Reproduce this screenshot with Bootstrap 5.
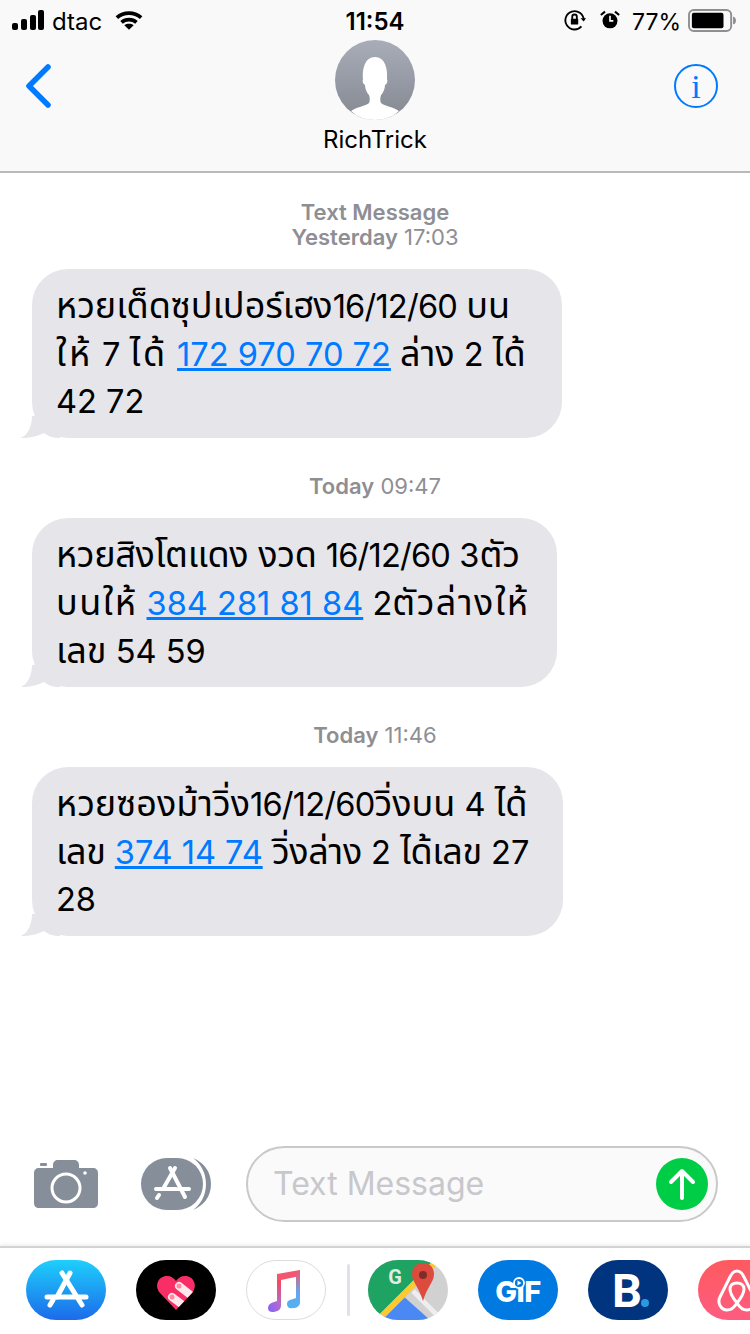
<!DOCTYPE html>
<html lang="th">
<head>
  <meta charset="UTF-8">
  <meta name="viewport" content="width=device-width, initial-scale=1.0">
  <title>Messages</title>
  <link href="https://cdn.jsdelivr.net/npm/bootstrap@5.3.3/dist/css/bootstrap.min.css" rel="stylesheet">
  <style>
    html, body { height: 1334px; }
    body {
      width: 750px;
      overflow: hidden;
      font-family: Inter, "Noto Sans Thai", "Noto Sans", "DejaVu Sans", sans-serif;
      color: #000;
      background: #fff;
    }
    .top-area {
      height: 173px;
      background: #f9f9f9;
      border-bottom: 2px solid #b9b9bb;
    }
    .status-bar {
      height: 40px;
      padding: 0 14px 0 12px;
      font-size: 24px;
      line-height: 36px;
    }
    .status-side { flex: 1 1 0; }
    .status-text { padding-top: 4px; }
    .status-time { font-weight: 600; margin-left: 2px; }
    .carrier { margin-left: 8px; }
    .wifi-icon { margin-left: 13px; }
    .lock-icon { margin-right: 14px; }
    .alarm-icon { margin-right: 12px; }
    .battery-pct { font-size: 23px; margin-right: 7px; }
    .nav-row { padding: 0 32px; height: 131px; }
    .nav-side { width: 44px; padding-top: 24px; }
    .nav-back { margin-left: -7px; display: block; }
    .nav-info { display: block; }
    .contact-name { font-size: 24px; line-height: 30px; margin-top: 5px; }
    .avatar { width: 80px; height: 80px; display: block; }
    .thread { padding-top: 27px; }
    .stamp {
      font-size: 22px;
      line-height: 25px;
      color: #8e8e93;
      text-align: center;
    }
    .stamp b { font-weight: 600; }
    .stamp-gap { margin-top: 36px; }
    .bubble {
      position: relative;
      background: #e5e5ea;
      border-radius: 36px;
      margin: 19px 0 0 32px;
      padding: 13px 0 0 24px;
      height: 169px;
      font-size: 32.6px;
      line-height: 47px;
      white-space: nowrap;
    }
    .bubble a { color: #007aff; }
    .th-run { font-size: 36px; }
    .th-wide { letter-spacing: 2.7px; }
    .th-mid { letter-spacing: 1.5px; }
    .th-tight { letter-spacing: -.3px; }
    .date-run { letter-spacing: -.8px; }
    .bubble-a { width: 530px; }
    .bubble-b { width: 525px; }
    .bubble-c { width: 531px; }
    .bubble-tail { position: absolute; left: -12px; bottom: 0; width: 40px; height: 22px; }
    .composer { padding: 0 32px 0 34px; height: 76px; margin-top: auto; margin-bottom: 24px; }
    .composer-btn { flex: none; }
    .drawer-btn { margin-left: 43px; }
    .msg-field {
      margin-left: 35px;
      flex: 1 1 0;
      height: 76px;
      background: #fafafa;
      border: 2px solid #c8c8cd;
      border-radius: 38px;
      padding: 0 8px 0 25px;
      font-size: 32px;
      color: #c7c7cc;
    }
    .send-btn {
      width: 52px; height: 52px;
      border-radius: 50%;
      background: #00cd46;
    }
    .dock {
      height: 88px;
      border-top: 2px solid #d3d3d6;
      box-shadow: 0 -2px 3px rgba(0,0,0,.06);
      padding: 12px 0 0 26px;
      gap: 30px;
      overflow: hidden;
      flex: none;
    }
    .dock svg { flex: none; width: 80px; height: 60px; display: block; }
    .dock-sep { flex: none; width: 3px; height: 52px; margin: 4px -12px 0 -9px; background: #e1e1e8; border-radius: 2px; }
  </style>
</head>
<body class="d-flex flex-column">
  <header class="top-area flex-shrink-0">
    <div class="status-bar d-flex align-items-center">
      <div class="status-side d-flex align-items-center">
        <svg width="32" height="20" viewBox="0 0 32 20"><rect x="0" y="13" width="6" height="7" rx="2"/><rect x="9" y="9" width="6" height="11" rx="2"/><rect x="18" y="5" width="6" height="15" rx="2"/><rect x="26" y="0" width="6" height="20" rx="2"/></svg>
        <span class="carrier status-text">dtac</span>
        <svg class="wifi-icon" width="28" height="21" viewBox="0 0 30 22" fill="none" stroke="#000" stroke-width="4"><path d="M2 8c7.500-6.500 18.500-6.500 26 0"/><path d="M7 13c4.500-4 11.500-4 16 0"/><path d="M15 21l-5-5c3-2 7-2 10 0z" fill="#000" stroke="none"/></svg>
      </div>
      <div class="status-time status-text">11:54</div>
      <div class="status-side d-flex align-items-center justify-content-end">
        <svg class="lock-icon" width="22" height="22" viewBox="0 0 24 24" fill="none" stroke="#000" stroke-width="2"><path d="M19 19a10 10 0 1 1 2.500-7"/><path d="M18 10l3.500 3.500L24 10" fill="#000" stroke="none"/><rect x="7.500" y="10.500" width="8" height="6.500" rx="1" fill="#000" stroke="none"/><path d="M9 11V8.500a2.500 2.500 0 0 1 5 0V11"/></svg>
        <svg class="alarm-icon" width="20" height="22" viewBox="0 0 24 24"><circle cx="12" cy="13" r="9"/><path d="M12 7v6h4" fill="none" stroke="#fff" stroke-width="2"/><path d="M1 6l5-4M23 6l-5-4" stroke="#000" stroke-width="2.500"/></svg>
        <span class="battery-pct status-text">77%</span>
        <svg width="48" height="23" viewBox="0 0 50 24"><rect x="1" y="1" width="44" height="22" rx="5" fill="none" stroke="#8e8e93" stroke-width="2"/><rect x="4" y="4" width="33" height="16" rx="2"/><path d="M47 8c2 0 3 2 3 4s-1 4-3 4z" fill="#8e8e93"/></svg>
      </div>
    </div>
    <div class="nav-row d-flex justify-content-between align-items-start">
      <div class="nav-side">
        <svg class="nav-back" width="28" height="44" viewBox="0 0 28 44" fill="none" stroke="#007aff" stroke-width="5.500" stroke-linecap="round" stroke-linejoin="round"><path d="M23 3L4 22l19 19"/></svg>
      </div>
      <div class="d-flex flex-column align-items-center">
        <svg class="avatar" viewBox="0 0 80 80">
          <defs><linearGradient id="avatarFill" x1="0" y1="0" x2="0" y2="1"><stop offset="0" stop-color="#a9adb9"/><stop offset="1" stop-color="#848891"/></linearGradient></defs>
          <circle cx="40" cy="40" r="40" fill="url(#avatarFill)"/>
          <path d="M16 71c5-4 15-5 18-8 1-2 1-5 0-8-2-2-4-6-4-10-2-1-3-4-2-6-1-10 2-22 12-22s13 12 12 22c1 2 0 5-2 6 0 4-2 8-4 10-1 3-1 6 0 8 3 3 13 4 18 8-6 6-15 9-24 9s-18-3-24-9z" fill="#fff"/>
        </svg>
        <div class="contact-name">RichTrick</div>
      </div>
      <div class="nav-side">
        <svg class="nav-info" width="44" height="44" viewBox="0 0 44 44"><circle cx="22" cy="22" r="21" fill="none" stroke="#007aff" stroke-width="2"/><text x="22" y="34" text-anchor="middle" font-family="Liberation Serif, serif" font-size="34" fill="#007aff">i</text></svg>
      </div>
    </div>
  </header>

  <main class="thread flex-shrink-0">
    <div class="stamp"><b>Text Message</b><br><b>Yesterday</b> 17:03</div>
    <div class="bubble bubble-a">
      <svg class="bubble-tail" viewBox="0 0 40 22"><path d="M12 0C12 10 8 19 1 22 10 22 18 20 24 17 28 20 33 22 40 22V0z" fill="#e5e5ea"/></svg>
      <span class="th-run">หวยเด็ดซุปเปอร์เฮง</span><span class="date-run">16/12/60</span> <span class="th-run">บน</span><br><span class="th-run th-wide">ให้</span> 7 <span class="th-run th-wide">ได้</span> <a href="#">172 970 70 72</a> <span class="th-run">ล่าง</span> 2 <span class="th-run">ได้</span><br>42 72
    </div>
    <div class="stamp stamp-gap"><b>Today</b> 09:47</div>
    <div class="bubble bubble-b">
      <svg class="bubble-tail" viewBox="0 0 40 22"><path d="M12 0C12 10 8 19 1 22 10 22 18 20 24 17 28 20 33 22 40 22V0z" fill="#e5e5ea"/></svg>
      <span class="th-run th-tight">หวยสิงโตแดง งวด</span> <span class="date-run">16/12/60</span> 3<span class="th-run">ตัว</span><br><span class="th-run th-mid">บนให้</span> <a href="#">384 281 81 84</a> 2<span class="th-run th-mid">ตัวล่างให้</span><br><span class="th-run">เลข</span> 54 59
    </div>
    <div class="stamp stamp-gap"><b>Today</b> 11:46</div>
    <div class="bubble bubble-c">
      <svg class="bubble-tail" viewBox="0 0 40 22"><path d="M12 0C12 10 8 19 1 22 10 22 18 20 24 17 28 20 33 22 40 22V0z" fill="#e5e5ea"/></svg>
      <span class="th-run">หวยซองม้าวิ่ง</span><span class="date-run">16/12/60</span><span class="th-run">วิ่งบน</span> 4 <span class="th-run">ได้</span><br><span class="th-run th-tight">เลข</span> <a href="#">374 14 74</a> <span class="th-run th-tight">วิ่งล่าง</span> 2 <span class="th-run th-tight">ได้เลข</span> 27<br>28
    </div>
  </main>

  <div class="composer d-flex align-items-center">
    <svg class="composer-btn" width="64" height="48" viewBox="0 0 64 48"><path d="M5 8h14V5c0-3 2-5 5-5h16c3 0 5 2 5 5v3h14c3 0 5 2 5 5v30c0 3-2 5-5 5H5c-3 0-5-2-5-5V13c0-3 2-5 5-5z" fill="#868e99"/><rect x="6" y="3" width="7" height="3" rx="1" fill="#868e99"/><circle cx="32" cy="28" r="14" fill="none" stroke="#fff" stroke-width="3"/><circle cx="51" cy="13" r="1.800" fill="#fff"/></svg>
    <svg class="composer-btn drawer-btn" width="70" height="52" viewBox="0 0 70 52"><path d="M52 0c10 4 18 13 18 26s-8 22-18 26c7-5 13-14 13-26S59 5 52 0z" fill="#868e99"/><rect x="0" y="0" width="62" height="52" rx="26" fill="#868e99"/><g fill="none" stroke="#fff" stroke-width="4" stroke-linecap="round"><path d="M29 10l15 29"/><path d="M34 10L22 31"/><path d="M15 31h20M38 31h10"/><path d="M18 37l-2 3"/></g></svg>
    <div class="msg-field d-flex align-items-center justify-content-between">
      <span>Text Message</span>
      <div class="send-btn d-flex align-items-center justify-content-center">
        <svg width="28" height="32" viewBox="0 0 28 32" fill="none" stroke="#fff" stroke-width="4" stroke-linecap="round" stroke-linejoin="round"><path d="M14 30V3M3 14L14 3l11 11"/></svg>
      </div>
    </div>
  </div>

  <footer class="dock d-flex">
    <svg viewBox="0 0 80 60"><defs><linearGradient id="storeFill" x1="0" y1="0" x2="0" y2="1"><stop offset="0" stop-color="#1ecffc"/><stop offset="1" stop-color="#1c6bea"/></linearGradient></defs><rect width="80" height="60" rx="30" fill="url(#storeFill)"/><g fill="none" stroke="#fff" stroke-width="5" stroke-linecap="round"><path d="M36 13l20 32"/><path d="M44 13L31 37"/><path d="M21 37h39"/><path d="M27 40l-3 5"/></g></svg>
    <svg viewBox="0 0 80 60"><defs><clipPath id="heartClip"><path d="M40 50L24 33c-6-7-2-17 7-17 4 0 7 2 9 5 2-3 5-5 9-5 9 0 13 10 7 17z"/></clipPath></defs><rect width="80" height="60" rx="30"/><path d="M40 50L24 33c-6-7-2-17 7-17 4 0 7 2 9 5 2-3 5-5 9-5 9 0 13 10 7 17z" fill="#fa2e66"/><g clip-path="url(#heartClip)"><path d="M43 26l18 14M36 37l16 12" stroke="#ffe9ed" stroke-width="8" stroke-linecap="round"/><circle cx="43" cy="26" r="2.500" fill="#ff8a9e"/><circle cx="36" cy="37" r="2.500" fill="#ff8a9e"/></g></svg>
    <svg viewBox="0 0 80 60"><defs><linearGradient id="musicFill" x1="0.800" y1="0" x2="0.200" y2="1"><stop offset="0" stop-color="#f9455d"/><stop offset="0.500" stop-color="#b36ccb"/><stop offset="1" stop-color="#8a63f7"/></linearGradient><linearGradient id="musicRight" x1="0" y1="0" x2="0" y2="1"><stop offset="0" stop-color="#f4566f"/><stop offset="0.550" stop-color="#66a4ea"/><stop offset="1" stop-color="#4fb3f5"/></linearGradient></defs><rect x=".5" y=".5" width="79" height="59" rx="29.500" fill="#fff" stroke="#dcdcde"/><path d="M31 14l23-4v6l-19 4v25h-4z" fill="#f4566f"/><path d="M31 20h4v25c0 5-3 6-7 7-4 .5-6-1-6-4s2-5 6-6l3-1z" fill="url(#musicFill)"/><path d="M50 11h4v31c0 4-3 6-7 6-4 1-6-1-6-4s2-4 6-5l3-1z" fill="url(#musicRight)"/></svg>
    <div class="dock-sep"></div>
    <svg viewBox="0 0 80 60"><defs><clipPath id="mapClip"><rect width="80" height="60" rx="30"/></clipPath></defs><g clip-path="url(#mapClip)"><rect width="80" height="60" fill="#d1d1d1"/><path d="M0 0h66L6 60H0z" fill="#1ea362"/><path d="M34 35l28 25H12z" fill="#4a89f3"/><path d="M45 31l27 27" stroke="#eee" stroke-width="5"/><path d="M10 60L66 4" stroke="#fcc934" stroke-width="6"/><path d="M44 14c0-7 5-11 11-11s11 4 11 11c0 8-7 13-11 27-4-14-11-19-11-27z" fill="#dc4b3e"/><circle cx="55" cy="15" r="4" fill="#802d27"/></g><text x="27" y="24" text-anchor="middle" font-family="Roboto, sans-serif" font-weight="700" font-size="20" fill="#dfeee4">G</text></svg>
    <svg viewBox="0 0 80 60"><rect width="80" height="60" rx="30" fill="#0079e0"/><text x="40" y="42" text-anchor="middle" font-family="Inter, sans-serif" font-weight="800" font-size="29" letter-spacing="-.5" fill="#fff">GiF</text><circle cx="41" cy="23" r="5" fill="#0079e0" stroke="#fff" stroke-width="1.800"/><path d="M39.500 20.500l4 2.500-4 2.500z" fill="#fff"/></svg>
    <svg viewBox="0 0 80 60"><rect width="80" height="60" rx="30" fill="#00347f"/><text x="24" y="47" font-family="Roboto, sans-serif" font-weight="700" font-size="47" fill="#fff">B</text><circle cx="57" cy="43" r="4" fill="#2a9ae0"/></svg>
    <svg viewBox="0 0 80 60"><defs><linearGradient id="bnbFill" x1="0" y1="0" x2="0" y2="1"><stop offset="0" stop-color="#ff5a5f"/><stop offset="1" stop-color="#fd5c80"/></linearGradient></defs><rect width="80" height="60" rx="30" fill="url(#bnbFill)"/><g fill="none" stroke="#fff" stroke-width="3"><path d="M39 11c-3 0-5 2-6.500 5L22 37c-3 6 1 13 7 13 4 0 7-2 10-7 3 5 6 7 10 7 6 0 10-7 7-13L45.500 16c-1.500-3-3.500-5-6.500-5z"/><path d="M39 43c-4-5-7-10-7-14 0-4 3-6 7-6s7 2 7 6c0 4-3 9-7 14z"/></g></svg>
  </footer>
</body>
</html>
